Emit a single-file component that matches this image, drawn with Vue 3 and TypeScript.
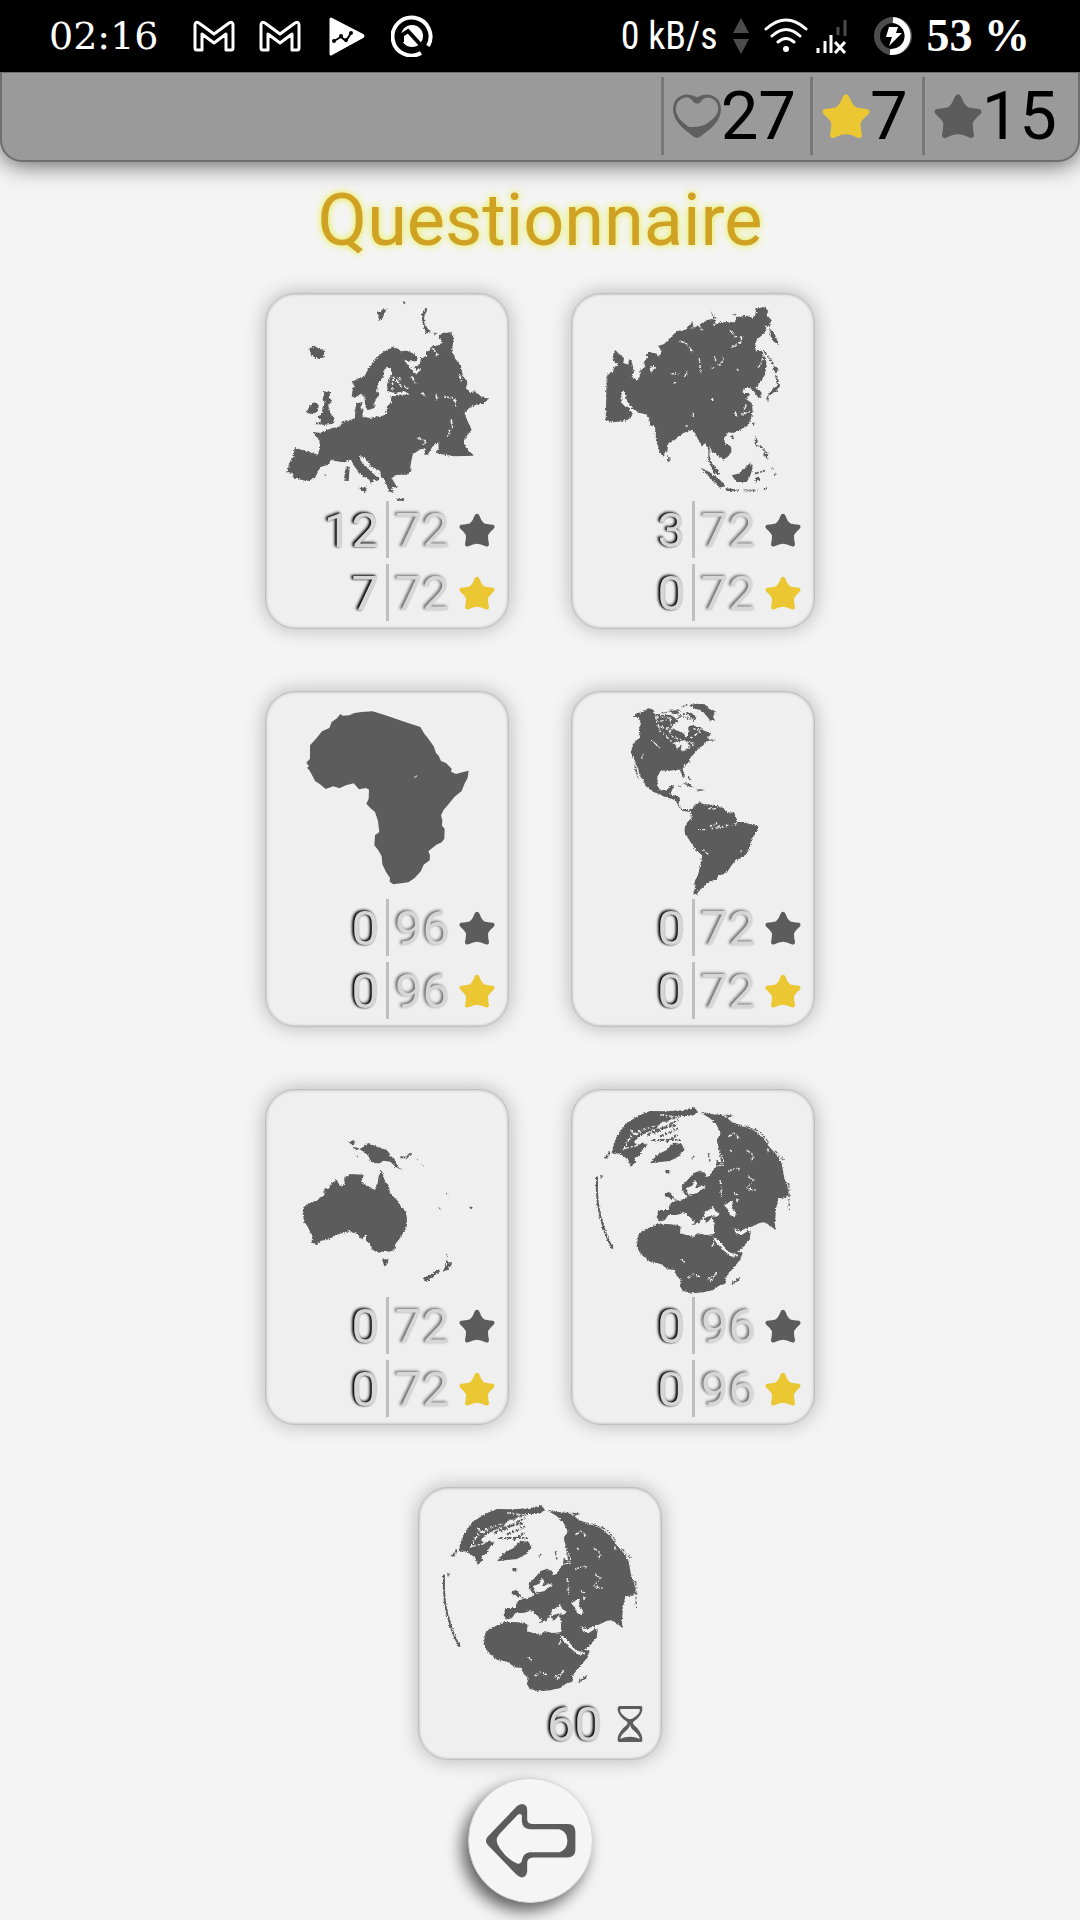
<script setup lang="ts">
interface Tally {
  won: number
  total: number
  tone: 'grey' | 'gold'
}

interface Quiz {
  id: string
  label: string
  map: string
  origin: string
  rows: Tally[]
}

const tally = (total: number, grey: number, gold: number): Tally[] => [
  { won: grey, total, tone: 'grey' },
  { won: gold, total, tone: 'gold' },
]

const quizzes: Quiz[] = [
  { id: 'europe', label: 'Europe', map: 'map-europe', origin: '32 40', rows: tally(72, 12, 7) },
  { id: 'asia', label: 'Asie', map: 'map-asia', origin: '33 40', rows: tally(72, 3, 0) },
  { id: 'africa', label: 'Afrique', map: 'map-africa', origin: '32 32', rows: tally(96, 0, 0) },
  { id: 'america', label: 'Amérique', map: 'map-america', origin: '33 32', rows: tally(72, 0, 0) },
  { id: 'oceania', label: 'Océanie', map: 'map-oceania', origin: '32 27', rows: tally(72, 0, 0) },
  { id: 'world', label: 'Monde', map: 'map-world', origin: '33 27', rows: tally(96, 0, 0) },
]
</script>

<template>
  <div class="screen">
    <svg class="defs" aria-hidden="true">
      <defs>
        <filter id="coast" filterUnits="userSpaceOnUse" x="0" y="0" width="800" height="720" color-interpolation-filters="sRGB">
          <feTurbulence type="fractalNoise" baseFrequency="0.2" numOctaves="2" seed="4" result="n" />
          <feDisplacementMap in="SourceGraphic" in2="n" scale="10" xChannelSelector="R" yChannelSelector="G" />
        </filter>

        <symbol id="star" viewBox="0 0 108 102">
          <path d="M54 5 Q57 5 59 10 Q66 30 76 34 Q86 37 101 38 Q106 40 102 45 Q85 60 84 68 Q84 80 87 94 Q87 99 81 97 Q66 89 54 89 Q42 89 27 97 Q21 99 21 94 Q24 80 24 68 Q23 60 6 45 Q2 40 7 38 Q22 37 32 34 Q42 30 49 10 Q51 5 54 5Z" fill="currentColor" stroke="currentColor" stroke-width="6" stroke-linejoin="round" />
        </symbol>

        <symbol id="gmail" viewBox="0 0 42 32">
          <path d="M4 30 Q2 30 2 28 V5 Q2 1 6 3 L21 14 L36 3 Q40 1 40 5 V28 Q40 30 38 30 H33 V14 L21 23 L9 14 V30Z" fill="none" stroke="#fff" stroke-width="3" stroke-linejoin="round" />
        </symbol>

        <g id="map-europe">
          <path fill="#5c5c5c" d="M122 505 L160 515 190 525 197 505 195 480 180 465 178 457 198 460 207 455 235 445 258 440 265 425 290 420 302 415 303 385 308 370 325 368 318 385 328 390 322 410 345 415 375 410 395 405 398 380 412 368 410 350 430 345 468 345 450 335 425 340 400 335 398 315 405 295 412 285 410 268 400 262 390 270 388 290 372 310 368 335 375 345 362 362 360 385 340 392 333 380 330 350 320 342 300 355 292 350 295 330 300 315 292 305 330 290 345 262 365 235 390 215 415 203 430 207 440 215 455 213 480 222 490 235 485 245 465 245 450 240 460 255 472 270 485 285 500 268 485 270 480 262 497 250 500 235 515 230 515 215 525 215 530 200 548 198 565 190 560 180 550 172 565 160 590 158 598 175 593 215 605 240 620 260 625 285 640 310 635 325 645 338 662 335 680 350 702 360 685 372 665 375 645 385 630 400 640 425 652 450 640 465 628 485 632 500 645 515 660 528 600 530 570 525 545 520 553 505 552 488 535 500 520 525 510 525 512 505 495 510 475 525 468 560 470 578 455 585 430 585 412 595 428 622 410 625 418 640 403 635 398 618 390 600 380 590 378 575 350 560 330 532 315 530 320 545 345 570 365 590 378 596 368 605 358 598 350 614 345 600 320 585 300 560 290 540 270 548 245 545 230 540 222 555 200 562 190 575 182 595 160 605 130 598 120 598 115 580 98 578 105 550 118 530 120 510Z" />
          <path fill="#5c5c5c" d="M165 207 L180 198 195 208 210 210 208 234 185 236 170 225Z M210 335 L230 338 222 352 232 362 222 380 228 400 240 415 236 432 205 436 182 432 200 425 190 410 202 405 205 382 212 370 205 360Z M165 380 L180 368 194 375 190 395 175 403 157 400Z M366 95 L380 98 384 90 400 86 392 98 385 115 375 124 372 108Z M515 82 L519 90 510 110 510 135 530 158 515 162 503 128 502 105Z M276 560 L286 562 283 603 270 603 271 578 Z M310 625 L337 623 335 640Z M425 656 L450 659 448 663 430 663Z M535 159 L550 160 540 166Z M210 584 L218 586 212 589Z M446 64 L454 68 447 72Z" />
          <path fill="none" stroke="#efefef" stroke-width="5" stroke-dasharray="14 4 8 6" d="M418 290 L412 330 M425 300 L445 325 M430 295 L440 300 M450 318 L462 330 M472 290 L488 318 M535 205 L550 228 M500 338 L515 350 M545 345 L548 360 M570 352 L600 355 605 380 M590 420 L594 440 580 470 M490 475 L518 485 505 495 M615 285 L622 305" />
        </g>

        <g id="map-asia">
          <path fill="#5c5c5c" d="M140 288 L160 275 162 262 175 255 158 240 160 222 168 213 180 225 192 235 190 250 205 255 207 238 215 245 220 265 222 278 215 290 230 303 240 290 238 275 255 262 253 245 262 235 258 222 268 217 290 222 298 232 305 215 295 200 312 193 330 175 350 155 375 150 395 128 400 135 392 148 410 140 430 128 440 122 455 118 470 122 455 140 480 128 510 127 525 128 528 112 560 108 578 115 590 100 585 88 615 82 625 95 620 105 633 120 630 138 615 138 620 150 608 165 590 180 585 200 588 215 605 213 612 225 620 250 615 285 600 310 585 325 605 335 603 355 590 350 582 335 570 325 555 325 545 340 565 340 570 345 558 358 575 370 578 395 572 420 560 440 540 450 520 460 505 458 492 475 495 490 512 500 515 515 505 530 490 540 470 525 455 515 450 500 448 525 455 550 475 575 478 585 462 580 450 555 445 535 445 510 435 490 425 500 415 480 405 460 395 452 370 460 345 480 325 492 322 515 308 530 300 520 288 480 285 440 272 438 268 420 262 405 240 400 222 390 210 378 200 360 196 345 190 332 184 340 184 370 195 380 205 382 218 402 212 415 190 425 160 428 137 420 138 380Z" />
          <path fill="#5c5c5c" d="M628 145 L645 165 657 197 640 185 630 165Z M322 525 L330 535 328 548 321 543Z M422 564 L445 575 480 600 495 620 480 624 450 595Z M495 626 L525 629 545 633 500 634Z M515 587 L535 582 560 560 572 548 578 565 570 590 560 607 530 607Z M585 470 L594 485 588 495 598 500 590 503 584 490Z M578 430 L584 428 581 443Z M510 470 L522 465 518 480Z M640 265 L655 265 650 280 640 272Z M645 285 L652 290 660 320 650 333 635 342 622 350 640 325 652 320Z M617 355 L628 350 624 368Z M585 595 L600 590 600 608 592 600 588 612Z M608 525 L625 520 622 538Z M515 105 L530 102 525 108Z M610 628 L625 620 615 632Z M640 582 L652 582 645 587Z M450 90 L460 108 474 118 460 115Z" />
          <path fill="none" stroke="#5c5c5c" stroke-width="5" stroke-dasharray="12 4 6 3" d="M612 215 L635 245 645 265 M600 498 L620 520 M550 632 L592 632 M585 582 L615 573 M635 565 L640 570" />
          <path fill="none" stroke="#efefef" stroke-width="4" stroke-dasharray="16 5 9 7" d="M358 184 L378 190 397 215 M510 152 L525 170 545 172 543 187 512 205 M463 230 L470 250 M490 235 L485 252 470 260 M418 235 L422 282 M332 282 L355 283 M340 310 L348 308 M375 290 L383 270 M400 397 L400 412 M453 359 L460 359 M610 215 L605 250 592 270 M455 265 L460 265 M530 270 L536 272 M545 405 L570 395 M525 395 L530 410 M560 375 L550 395 M412 130 L428 152 M378 437 L383 440" />
          <path fill="#efefef" d="M268 268 L280 258 286 264 275 276Z" />
        </g>

        <g id="map-africa">
          <path fill="#5c5c5c" d="M258 101 L265 106 285 105 300 98 322 95 355 93 400 107 450 124 498 140 510 160 520 172 538 198 545 218 553 226 560 242 575 248 592 265 590 274 605 281 630 274 643 271 640 292 630 312 622 332 600 350 580 375 568 388 560 405 564 420 563 436 571 445 570 475 562 486 545 494 522 513 527 525 526 540 508 553 500 572 480 594 462 606 440 609 417 612 406 604 407 593 395 575 384 552 382 528 372 510 360 495 362 465 375 455 371 422 362 395 347 382 336 370 343 355 344 328 335 323 314 327 298 309 275 315 255 324 237 318 214 326 197 312 182 302 175 288 165 270 158 262 164 258 156 247 167 235 167 195 185 175 203 153 225 143 232 125 248 114Z" />
          <path fill="none" stroke="#efefef" stroke-width="3" d="M480 289 L484 291 488 285" />
        </g>

        <g id="map-america">
          <path fill="#5c5c5c" d="M218 110 L232 97 245 97 262 83 280 88 285 100 305 104 330 103 345 112 355 125 340 132 335 145 355 152 372 160 378 172 385 155 385 138 400 135 410 140 420 140 430 150 448 157 455 165 440 170 452 178 470 180 440 182 430 195 415 205 405 218 392 230 388 245 375 255 368 265 375 292 368 288 360 268 340 270 325 272 302 270 293 290 292 315 300 330 318 332 330 318 343 315 335 332 330 343 355 347 360 355 355 372 365 385 385 390 398 385 402 375 418 366 432 372 465 374 475 380 490 382 500 395 522 398 530 415 528 425 550 425 570 432 592 437 590 455 575 475 570 500 560 520 545 532 527 540 515 555 505 570 490 582 475 585 470 597 450 603 440 608 430 620 415 632 412 643 400 640 405 622 403 605 415 580 423 545 427 525 408 510 395 490 375 460 373 445 382 425 395 412 393 395 370 392 355 378 348 362 335 355 318 352 300 342 280 335 258 318 250 300 238 285 235 265 225 248 220 230 212 218 218 192 240 170 237 148 243 128 235 110Z" />
          <path fill="#5c5c5c" d="M388 76 L405 70 435 72 450 88 465 93 460 108 465 122 450 120 435 100 420 88 405 85Z M222 250 L230 265 236 298 228 280Z M368 308 L385 310 402 322 385 318Z M408 325 L435 329 415 333Z M374 95 L395 98 410 110 405 120 390 108Z M325 92 L345 90 365 98 340 102Z" />
          <path fill="none" stroke="#5c5c5c" stroke-width="4" stroke-dasharray="9 4 5 4" d="M305 98 L360 88 M365 80 L385 72 M355 105 L405 120 M350 115 L375 100 M385 290 L392 302 M355 316 L365 318" />
          <path fill="#efefef" d="M345 185 L375 180 388 195 375 212 362 210 365 195 350 205Z" />
          <path fill="none" stroke="#efefef" stroke-width="4" stroke-dasharray="7 5 11 6" d="M285 95 L290 125 320 118 M290 110 L330 112 335 150 M290 135 L330 150 M310 160 L340 190 365 195 M275 178 L300 205 M320 140 L340 172 372 180 M400 145 L425 150 390 175 M380 185 L405 190 385 205 M415 448 L440 448 M450 438 L470 430 480 442 455 445 M485 440 L530 430 M430 508 L445 522 M245 235 L250 220 M445 385 L470 385 M540 515 L550 510 M292 120 L300 155" />
        </g>

        <g id="map-oceania">
          <path fill="#5c5c5c" d="M380 270 L385 280 392 305 403 315 407 340 428 360 440 380 453 390 458 415 457 440 440 470 425 490 420 510 405 515 390 512 375 518 355 510 345 485 335 487 335 465 322 480 310 462 285 453 245 465 225 478 200 482 185 494 170 488 175 470 160 440 150 425 145 400 147 382 165 370 190 360 210 345 210 325 222 327 232 308 247 300 257 318 270 315 270 295 290 282 328 284 320 305 345 322 362 330 370 310 373 288Z M383 538 L402 538 400 552 390 559Z M315 208 L342 190 380 205 398 210 412 230 422 242 430 260 448 272 425 262 408 245 388 242 370 252 350 245 342 228 325 213Z M280 185 L300 181 305 188 296 196Z M293 200 L315 205 308 211Z M505 595 L525 586 553 566 557 575 530 594 518 606Z M566 574 L576 552 575 540 593 552 580 570Z M575 518 L581 532 575 532Z M645 380 L653 380 648 388Z M307 226 L311 229 308 234Z" />
          <path fill="none" stroke="#5c5c5c" stroke-width="5" d="M438 232 L458 232 465 222 473 222" />
          <path fill="none" stroke="#5c5c5c" stroke-width="3" stroke-dasharray="7 12" d="M489 238 L513 264 M554 382 L562 395 M575 338 L580 350" />
        </g>

        <g id="map-world">
          <path fill="#5c5c5c" d="M155 222 L160 195 175 160 200 130 235 107 270 93 320 94 370 90 390 85 405 82 412 95 400 107 365 108 330 112 325 125 305 125 290 145 265 155 240 168 222 185 230 195 250 190 262 195 245 212 240 225 222 235 228 248 212 260 205 240 190 228 175 220Z" />
          <path fill="none" stroke="#5c5c5c" stroke-width="6" stroke-dasharray="12 4 7 4" d="M280 160 L355 120 M285 150 L350 135 M300 170 L355 145 M275 180 L360 180 M310 120 L355 112 M140 225 L135 235 M150 215 L140 235 M262 165 L290 150 M320 185 L350 165" />
          <path fill="#5c5c5c" d="M270 250 L290 225 320 210 340 188 365 192 373 208 358 228 330 243 300 246Z M316 270 L328 270 328 281 318 280Z M314 340 L330 335 342 352 335 360 325 350 315 352Z" />
          <path fill="#5c5c5c" d="M422 98 L455 102 490 105 515 125 545 138 580 150 610 175 628 200 650 225 665 250 672 290 682 315 686 345 672 355 655 355 648 385 645 430 646 450 635 440 615 427 600 428 575 440 550 450 572 455 570 475 550 500 530 517 548 518 540 540 515 570 495 595 498 610 475 618 460 630 430 637 395 640 368 632 360 618 365 600 350 588 345 570 325 568 300 552 270 545 245 525 230 500 235 465 250 450 275 442 290 433 320 432 350 434 362 440 360 460 380 465 400 470 412 460 440 465 462 462 462 435 440 430 432 415 440 400 420 425 400 435 392 425 370 400 348 405 325 405 315 420 300 425 290 412 295 390 325 390 330 370 350 362 370 358 385 350 372 340 365 318 385 298 400 280 420 272 435 280 440 292 452 285 455 275 468 262 470 240 485 255 478 210 470 180 482 160 470 135 450 115Z" />
          <path fill="#efefef" d="M455 468 L480 485 508 518 530 522 540 528 515 530 495 515 470 490Z M520 445 L540 452 575 440 560 455 545 465 530 462Z M435 395 L455 385 460 378 465 392 480 402 470 410 450 408 430 414Z M492 375 L515 362 520 375 515 385 528 395 525 412 510 405 505 390Z M455 412 L440 430 448 438 465 432Z M360 395 L380 400 405 428 395 435 375 410Z M528 355 L538 360 530 368Z M378 325 L395 318 405 300 412 310 405 325 425 318 438 320 410 340 385 345Z" />
          <path fill="none" stroke="#5c5c5c" stroke-width="6" d="M111 290 Q107 380 130 440 Q142 478 158 506" />
          <path fill="#5c5c5c" d="M508 614 L530 598 543 590 530 608Z M490 103 L520 107 505 113Z" />
          <path fill="none" stroke="#5c5c5c" stroke-width="4" stroke-dasharray="13 5 7 4" d="M555 138 L600 155 628 190 M645 212 L670 240 M686 310 L688 390 M445 220 L450 245 M395 235 L403 228 M122 285 L124 295 M330 345 L350 362" />
          <path fill="none" stroke="#efefef" stroke-width="4" stroke-dasharray="12 5 5 6" d="M505 170 L525 160 540 178 M560 210 L580 225 575 245 M505 275 L525 262 540 268 M470 260 L492 250 485 225 M565 290 L580 300 560 325 585 330 M480 300 L485 350 M385 595 L400 583 420 590 M440 600 L470 580 450 605 M365 538 L375 548 M190 210 L215 165 245 150 M200 180 L260 145 300 135 M195 205 L240 195 M300 105 L350 110 M510 210 L516 215 M625 205 L622 220 M455 500 L462 490 M300 550 L305 560 M210 150 L232 165 M520 340 L535 345" />
        </g>
      </defs>
    </svg>

    <header class="status">
      <div class="status-left">
        <time class="clock">02:16</time>
        <svg width="42" height="32"><use href="#gmail" /></svg>
        <svg width="42" height="32"><use href="#gmail" /></svg>
        <svg width="42" height="42" viewBox="0 0 42 42">
          <path d="M6 4 L37 20 Q39 21 37 22 L6 39Z" fill="#fff" stroke="#fff" stroke-width="3" stroke-linejoin="round" />
          <path d="M9 26 L16 22 L21 26 L26 18" fill="none" stroke="#000" stroke-width="2" />
          <g><circle cx="9" cy="26" r="2" /><circle cx="16" cy="21" r="2" /><circle cx="21" cy="25" r="2" /><circle cx="26" cy="18" r="2" /></g>
        </svg>
        <svg width="42" height="42" viewBox="0 0 42 42" fill="none">
          <path d="M37 31 A19 19 0 1 0 30 38" stroke="#fff" stroke-width="4" />
          <circle cx="21" cy="21" r="11" fill="#fff" />
          <path d="M11 27 L11 20 L17 16 L37 38" stroke="#000" stroke-width="4" />
          <path d="M32 31 L37 36" stroke="#000" stroke-width="5" />
        </svg>
      </div>
      <div class="status-right">
        <span class="rate">0 kB/s</span>
        <svg width="30" height="36" viewBox="0 0 30 36" fill="#4c4c4c"><path d="M15 0 L23 15 H7Z M15 36 L23 21 H7Z" /></svg>
        <svg width="44" height="36" viewBox="0 0 44 36" fill="none" stroke="#fff" stroke-width="3" stroke-linecap="round">
          <path d="M2 11 Q22 -7 42 11 M8 18 Q22 5 36 18 M14 24 Q22 17 30 24" />
          <circle cx="22" cy="31" r="3" fill="#fff" stroke="none" />
        </svg>
        <svg width="49" height="36" viewBox="0 0 49 36" fill="none" stroke-width="3">
          <path d="M2 35 V30 M9 35 V23 M15 35 V17" stroke="#fff" />
          <path d="M22 17 V9 M29 18 V2" stroke="#4c4c4c" />
          <path d="M19 24 L29 35 M29 24 L19 35" stroke="#fff" />
        </svg>
        <svg width="40" height="40" viewBox="0 0 40 40" fill="none">
          <circle cx="20" cy="20" r="16" stroke="#4c4c4c" stroke-width="6" />
          <path d="M20 4 A16 16 0 1 1 17 36" stroke="#fff" stroke-width="6" />
          <path d="M16 11 H25 L23 17 H29 L16 30 L19 21 H13Z" fill="#fff" />
        </svg>
        <span class="charge">53 %</span>
      </div>
    </header>

    <section class="scorebar" aria-label="Scores">
      <div class="score">
        <svg width="48" height="46" viewBox="0 0 140 134">
          <path fill="#5f5f5f" fill-rule="evenodd" d="M70 131 Q62 130 50 119 Q0 85 0 46 Q2 8 40 4 Q56 4 70 12 Q84 4 100 4 Q138 8 140 46 Q140 85 90 119 Q78 130 70 131Z M45 98 Q78 102 100 88 Q134 66 132 42 Q128 14 100 13 Q88 14 80 27 Q70 34 60 27 Q52 13 40 12 Q10 16 8 46 Q8 74 45 98Z" />
        </svg>27
      </div>
      <div class="score"><svg class="gold" width="48" height="46"><use href="#star" /></svg>7</div>
      <div class="score"><svg class="grey" width="48" height="46"><use href="#star" /></svg>15</div>
    </section>

    <main>
      <h1>Questionnaire</h1>
      <div class="grid">
        <button v-for="quiz in quizzes" :key="quiz.id" type="button" class="card" :aria-label="quiz.label">
          <svg class="map" :viewBox="`${quiz.origin} 732 624`">
            <use :href="`#${quiz.map}`" :filter="quiz.id === 'africa' ? undefined : 'url(#coast)'" />
          </svg>
          <span v-for="row in quiz.rows" :key="row.tone" class="row">
            <span class="won">{{ row.won }}</span>
            <span class="total">{{ row.total }}</span>
            <svg :class="row.tone" width="36" height="34"><use href="#star" /></svg>
          </span>
        </button>
        <button type="button" class="card timed" aria-label="Monde chronométré">
          <svg class="map" viewBox="33 27 732 624"><use href="#map-world" filter="url(#coast)" /></svg>
          <span class="row">
            <span class="won time-left">60</span>
            <svg width="36" height="36" viewBox="0 0 108 108">
              <path fill="#5c5c5c" fill-rule="evenodd" d="M22 0 H88 Q92 2 91 12 Q88 32 63 48 Q62 54 66 57 Q88 76 91 96 Q92 106 88 108 H20 Q16 106 17 96 Q20 76 44 57 Q48 54 46 48 Q20 32 17 12 Q16 2 22 0Z M26 9 Q22 14 28 22 Q38 36 54 40 Q70 36 80 22 Q86 14 82 9Z M54 55 Q53 66 42 74 Q24 90 25 98 Q40 92 54 92 Q68 92 83 98 Q84 90 66 74 Q55 66 54 55Z" />
            </svg>
          </span>
        </button>
      </div>
      <button type="button" class="back" aria-label="Retour">
        <svg viewBox="87 57 370 370">
          <path fill="#5c5c5c" fill-rule="evenodd" d="M138 242 Q139 236 143 231 L230 140 Q245 126 258 137 Q262 142 262 150 V178 Q262 191 276 192 H385 Q407 193 407 215 V270 Q407 292 385 293 H280 Q262 294 262 310 V335 Q260 352 245 353 Q236 352 228 343 L143 255 Q138 249 138 242Z M170 240 Q172 230 180 221 L233 165 Q243 158 246 167 V185 Q248 207 270 208 H358 Q383 215 383 242 Q383 270 358 277 H270 Q248 280 246 303 Q243 313 233 312 Q205 302 180 266 Q170 252 170 240Z" />
        </svg>
      </button>
    </main>
  </div>
</template>

<style>
body {
  margin: 0;
  background: #f4f4f4;
}
</style>

<style scoped>
.screen {
  min-height: 100vh;
  background: #f4f4f4;
  font-family: Roboto, sans-serif;
  overflow: hidden;
}
.defs {
  position: absolute;
  width: 0;
  height: 0;
}
svg {
  display: block;
  flex: none;
}
.status {
  display: flex;
  justify-content: space-between;
  align-items: center;
  box-sizing: border-box;
  height: 72px;
  padding: 0 50px 0 49px;
  background: #000;
  color: #fff;
}
.status-left,
.status-right {
  display: flex;
  align-items: center;
}
.status-left {
  gap: 24px;
}
.status-right {
  gap: 8px;
}
.clock {
  min-width: 120px;
  font: 38px/56px "DejaVu Serif", serif;
}
.charge {
  padding-left: 6px;
  font: bold 46px/56px "Liberation Serif", serif;
}
.rate {
  font: 38px/56px "Roboto Condensed", "Liberation Sans Narrow", Roboto, sans-serif;
}
.scorebar {
  display: flex;
  justify-content: flex-end;
  box-sizing: border-box;
  height: 90px;
  padding: 4px 7px 5px;
  border: 2px solid #6e6e6e;
  border-top-width: 1px;
  border-radius: 0 0 22px 22px;
  background: #9a9a9a;
  box-shadow: 0 2px 24px rgba(0, 0, 0, 0.65);
}
.score {
  display: flex;
  align-items: center;
  padding: 0 14px 0 9px;
  border-left: 3px solid #777;
  color: #000;
  font-size: 67px;
  line-height: 76px;
}
.gold {
  color: #ebc833;
}
.grey {
  color: #5c5c5c;
}
main {
  display: flex;
  flex-direction: column;
  align-items: center;
}
h1 {
  margin: 17px 0 30px;
  color: #cfa224;
  font-size: 72px;
  font-weight: 400;
  line-height: 84px;
  text-shadow: 0 0 6px #e8ee60, 0 0 10px #f0f4a0;
}
.grid {
  display: grid;
  grid-template-columns: 244px 244px;
  gap: 62px;
}
.card {
  display: flex;
  flex-direction: column;
  box-sizing: border-box;
  padding: 0 0 7px;
  border: 1px solid #bfbfbf;
  border-radius: 30px;
  background: #efefef;
  box-shadow: inset 0 0 3px rgba(0, 0, 0, 0.3), 0 0 20px rgba(0, 0, 0, 0.26);
  font-family: inherit;
}
.timed {
  grid-column: 1 / -1;
  justify-self: center;
  width: 244px;
}
.map {
  width: 244px;
  height: 208px;
  margin: -1px -1px 0;
}
.row {
  display: flex;
  align-items: center;
  align-self: stretch;
  justify-content: flex-end;
  padding-right: 13px;
  font-size: 49px;
}
.row + .row {
  margin-top: 6px;
}
.won,
.total {
  padding-top: 3px;
  color: #d6d6d6;
  line-height: 54px;
}
.won {
  padding-right: 7px;
  text-shadow: -2px -1px 3px #000, -1px 0 2px #333;
}
.total {
  margin-right: 9px;
  padding-left: 6px;
  border-left: 3px solid #bfbfbf;
  text-shadow: -2px -1px 3px #666;
}
.time-left {
  padding-right: 10px;
}
.back {
  width: 125px;
  height: 125px;
  margin: 18px 20px 17px 0;
  padding: 0;
  border: 1px solid #d4d4d4;
  border-radius: 50%;
  background: #f5f5f5;
  box-shadow: -6px 8px 16px rgba(0, 0, 0, 0.6);
}
</style>
